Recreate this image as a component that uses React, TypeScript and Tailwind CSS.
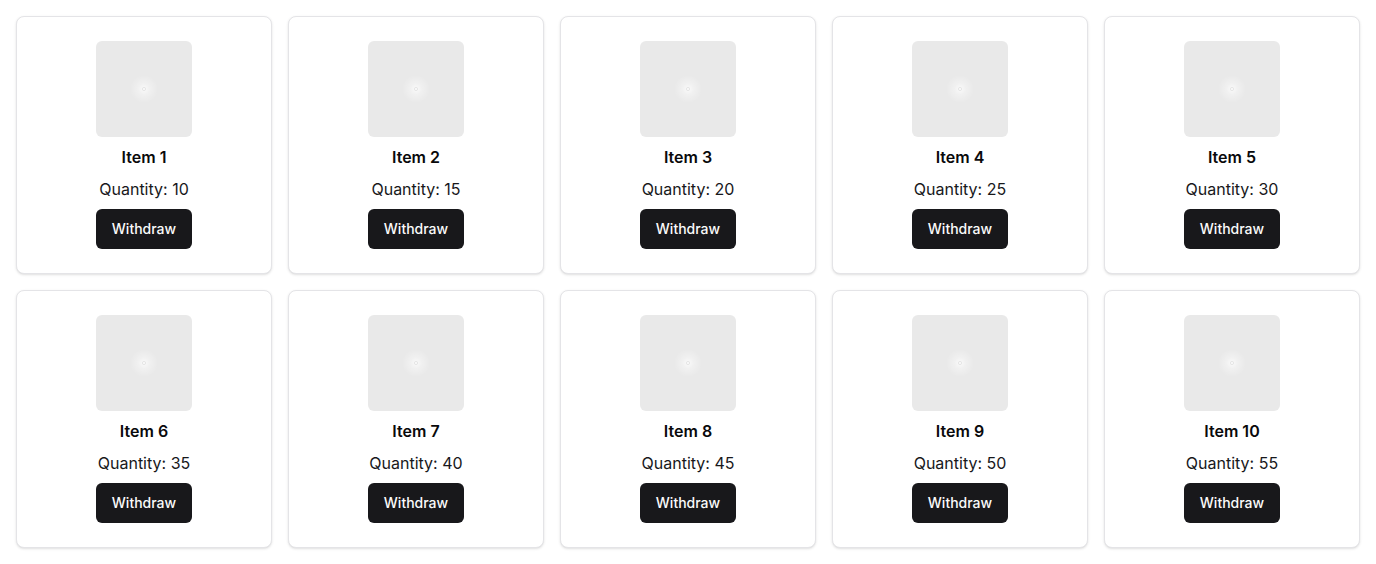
const items = Array.from({ length: 10 }, (_, i) => ({
  id: i + 1,
  name: `Item ${i + 1}`,
  quantity: 10 + i * 5,
}));

function Placeholder() {
  return (
    <div className="w-24 h-24 rounded-md bg-[#e9e9e9] flex items-center justify-center">
      <svg width="30" height="30" viewBox="0 0 30 30">
        <defs>
          <radialGradient id="glow" cx="50%" cy="50%" r="50%">
            <stop offset="0%" stopColor="#ffffff" stopOpacity="0.8" />
            <stop offset="40%" stopColor="#ffffff" stopOpacity="0.35" />
            <stop offset="100%" stopColor="#ffffff" stopOpacity="0" />
          </radialGradient>
        </defs>
        <circle cx="15" cy="15" r="14" fill="url(#glow)" />
        <circle cx="15" cy="15" r="1.6" fill="none" stroke="#e0e0e0" strokeWidth="0.8" />
      </svg>
    </div>
  );
}

export default function App() {
  return (
    <div className="p-4 bg-white min-h-screen" style={{ fontFamily: "Inter, 'Noto Sans', sans-serif" }}>
      <div className="grid grid-cols-5 gap-4">
        {items.map((item) => (
          <div
            key={item.id}
            className="rounded-lg border border-[#e4e4e7] bg-white shadow-sm p-6 flex flex-col items-center gap-2"
          >
            <Placeholder />
            <h3 className="text-base font-semibold leading-6 text-[#09090b]">{item.name}</h3>
            <p className="text-base leading-6 text-[#18181b]">Quantity: {item.quantity}</p>
            <button className="h-10 w-24 rounded-md bg-[#18181b] text-sm font-medium text-[#fafafa]">
              Withdraw
            </button>
          </div>
        ))}
      </div>
    </div>
  );
}
